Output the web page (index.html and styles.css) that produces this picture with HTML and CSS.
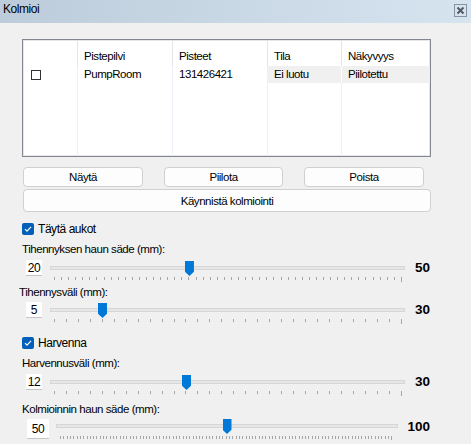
FILE: index.html
```
<html>
  <head>
    <meta charset="UTF-8" />
    <link rel="stylesheet" href="styles.css">
  </head>
  <body>
    <div class="titlebar">
      <span class="title">Kolmioi</span>
      <span class="close">
        <svg width="11" height="11" viewBox="0 0 11 11"><path d="M2.5 2.5 L8.5 8.5 M8.5 2.5 L2.5 8.5" stroke="#4d5a68" stroke-width="2"/></svg>
      </span>
    </div>

    <div class="main">
      <div class="list">
        <div class="col c0">
          <div class="hd"></div>
          <div class="cell"><span class="box"></span></div>
          <div class="fill"></div>
        </div>
        <div class="col c1">
          <div class="hd">Pistepilvi</div>
          <div class="cell">PumpRoom</div>
          <div class="fill"></div>
        </div>
        <div class="col c2">
          <div class="hd">Pisteet</div>
          <div class="cell">131426421</div>
          <div class="fill"></div>
        </div>
        <div class="col c3">
          <div class="hd">Tila</div>
          <div class="cell grey">Ei luotu</div>
          <div class="fill"></div>
        </div>
        <div class="col c4">
          <div class="hd">Näkyvyys</div>
          <div class="cell grey">Piilotettu</div>
          <div class="fill"></div>
        </div>
      </div>

      <div class="btn-row">
        <button class="btn">Näytä</button>
        <button class="btn mid">Piilota</button>
        <button class="btn">Poista</button>
      </div>
      <button class="btn wide">Käynnistä kolmiointi</button>

      <div class="check first">
        <span class="tick-box"><svg width="12" height="12" viewBox="0 0 12 12"><path d="M3 6.2 L5 8.2 L9 3.9" fill="none" stroke="#fff" stroke-width="1.2"/></svg></span>
        Täytä aukot
      </div>

      <div class="lbl">Tihennyksen haun säde (mm):</div>
      <div class="slider" data-min="1" data-max="50" data-value="20">
        <div class="num">20</div>
        <div class="track"><div class="rail"><span class="thumb"></span></div></div>
        <div class="ticks"></div>
        <div class="max">50</div>
      </div>

      <div class="lbl shifted">Tihennysväli (mm):</div>
      <div class="slider" data-min="1" data-max="30" data-value="5">
        <div class="num">5</div>
        <div class="track"><div class="rail"><span class="thumb"></span></div></div>
        <div class="ticks"></div>
        <div class="max">30</div>
      </div>

      <div class="check second">
        <span class="tick-box"><svg width="12" height="12" viewBox="0 0 12 12"><path d="M3 6.2 L5 8.2 L9 3.9" fill="none" stroke="#fff" stroke-width="1.2"/></svg></span>
        Harvenna
      </div>

      <div class="lbl">Harvennusväli (mm):</div>
      <div class="slider" data-min="1" data-max="30" data-value="12">
        <div class="num">12</div>
        <div class="track"><div class="rail"><span class="thumb"></span></div></div>
        <div class="ticks"></div>
        <div class="max">30</div>
      </div>

      <div class="lbl">Kolmioinnin haun säde (mm):</div>
      <div class="slider big" data-min="0" data-max="100" data-value="50">
        <div class="num">50</div>
        <div class="track"><div class="rail"><span class="thumb"></span></div></div>
        <div class="ticks"></div>
        <div class="max">100</div>
      </div>
    </div>

    <script>
      // build tick marks and place the thumbs from the data attributes
      document.querySelectorAll('.slider').forEach(function (s) {
        var min = +s.dataset.min, max = +s.dataset.max, val = +s.dataset.value;
        var ticks = s.querySelector('.ticks');
        for (var i = min; i <= max; i++) {
          ticks.appendChild(document.createElement('span'));
        }
        s.querySelector('.thumb').style.left = ((val - min) / (max - min) * 100) + '%';
      });
    </script>
  </body>
</html>
```

FILE: styles.css
```
body, html {
  margin: 0;
  padding: 0;
}

body {
  background: #f0f0f0;
  font-family: "Liberation Sans", Arial, sans-serif;
  font-size: 11.5px;
  letter-spacing: -0.45px;
  color: #000;
}

.titlebar {
  height: 23px;
  box-sizing: border-box;
  padding: 3px 4px 0 3px;
  display: flex;
  justify-content: space-between;
  align-items: flex-start;
  background: linear-gradient(to right, #bdccda, #d6e4f0);
  font-size: 12px;
  line-height: 13px;
}

.close {
  width: 13px;
  height: 13px;
  box-sizing: border-box;
  margin-top: 1px;
  border: 1px solid #8593a2;
  background: #d9e3ed;
  display: flex;
  align-items: center;
  justify-content: center;
}

.main {
  padding: 16px 0 0 22px;
}

/* list view */
.list {
  width: 409px;
  height: 118px;
  box-sizing: border-box;
  border: 1px solid #828790;
  box-shadow: inset 0 0 0 1px #e6e6e6;
  background: #fff;
  display: flex;
}

.col {
  display: flex;
  flex-direction: column;
}

.c0 { width: 55px; }
.c1 { width: 95px; }
.c2 { width: 95px; }
.c3 { width: 74px; }
.c4 { flex: 1; }

.hd {
  height: 26px;
  box-sizing: border-box;
  padding: 10px 0 0 6px;
  line-height: 12px;
  border-right: 1px solid #e5e5e5;
}

.cell {
  height: 17px;
  line-height: 17px;
  padding-left: 6px;
  border-right: 1px solid #edf2fa;
}

.cell.grey {
  background: #f0f0f0;
  border-right-color: #fff;
}

.fill {
  flex: 1;
  border-right: 1px solid #edf2fa;
}

.c4 .hd, .c4 .cell, .c4 .fill {
  border-right: none;
}

.c0 .cell {
  padding-left: 8px;
  display: flex;
  align-items: center;
}

.box {
  width: 10px;
  height: 10px;
  box-sizing: border-box;
  border: 1px solid #333;
  background: #fff;
}

/* buttons */
.btn-row {
  width: 401px;
  margin: 10px 0 0 1px;
  display: flex;
  justify-content: space-between;
}

.btn {
  width: 120px;
  height: 20px;
  box-sizing: border-box;
  padding: 0;
  border: 1px solid #d0d0d0;
  border-radius: 4px;
  background: #fdfdfd;
  font: inherit;
  letter-spacing: inherit;
  color: #000;
}

.btn.mid {
  width: 119px;
}

.btn.wide {
  display: block;
  width: 408px;
  height: 23px;
  margin: 2px 0 0 1px;
}

/* checkboxes */
.check {
  height: 12px;
  display: flex;
  align-items: center;
  gap: 4px;
  font-size: 12px;
}

.check.first { margin-top: 11px; }
.check.second { margin-top: 14px; }

.tick-box {
  width: 12px;
  height: 12px;
  border-radius: 2px;
  background: #005fb8;
  display: flex;
}

.lbl {
  line-height: 13px;
  margin-top: 8px;
}

.lbl.shifted {
  margin-left: -3px;
  margin-top: 5px;
}

/* sliders */
.slider {
  width: 404px;
  margin: 4px 0 0 4px;
  display: grid;
  grid-template-columns: 16px 1fr 25px;
  grid-template-rows: 16px 5px;
}

.lbl.shifted + .slider {
  margin-top: 3px;
}

.num {
  grid-column: 1;
  grid-row: 1 / 3;
  height: 16px;
  box-sizing: border-box;
  background: #fff;
  border-bottom: 1px solid #c4c4c4;
  text-align: center;
  line-height: 16px;
  font-size: 12px;
  letter-spacing: -0.3px;
}

.track {
  grid-column: 2;
  grid-row: 1;
  position: relative;
  margin-left: 8px;
}

.track::before {
  content: "";
  position: absolute;
  left: 0;
  right: 0;
  top: 6px;
  height: 4px;
  box-sizing: border-box;
  border: 1px solid #d6d6d6;
  background: #e6e6e6;
}

.rail {
  position: absolute;
  left: 4px;
  right: 3px;
  top: 1px;
  bottom: 0;
}

.thumb {
  position: absolute;
  top: 0;
  width: 9px;
  height: 15px;
  margin-left: -4px;
  background: #0078d7;
  clip-path: polygon(0 0, 100% 0, 100% 72%, 50% 100%, 0 72%);
}

.ticks {
  grid-column: 2;
  grid-row: 2;
  margin: 1px 3px 0 12px;
  display: flex;
  justify-content: space-between;
  align-items: flex-start;
}

.ticks span {
  width: 1px;
  height: 3px;
  background: #a6a6a6;
}

.ticks span:last-child {
  height: 5px;
}

.max {
  grid-column: 3;
  grid-row: 1;
  text-align: right;
  line-height: 16px;
  font-size: 13.5px;
  font-weight: bold;
  letter-spacing: 0;
}

.slider.big {
  width: 403px;
  margin: 3px 0 0 5px;
  grid-template-columns: 22px 1fr 32px;
  grid-template-rows: 15px 6px;
}

.big .num {
  height: 20px;
  line-height: 20px;
}

.big .track {
  margin-left: 7px;
}

.big .track::before {
  top: 5px;
}

.big .rail {
  top: 0;
  right: 5px;
}

.big .ticks {
  margin: 2px 5px 0 11px;
}

.big .ticks span:last-child {
  height: 4px;
}

.big .max {
  line-height: 15px;
}
```
